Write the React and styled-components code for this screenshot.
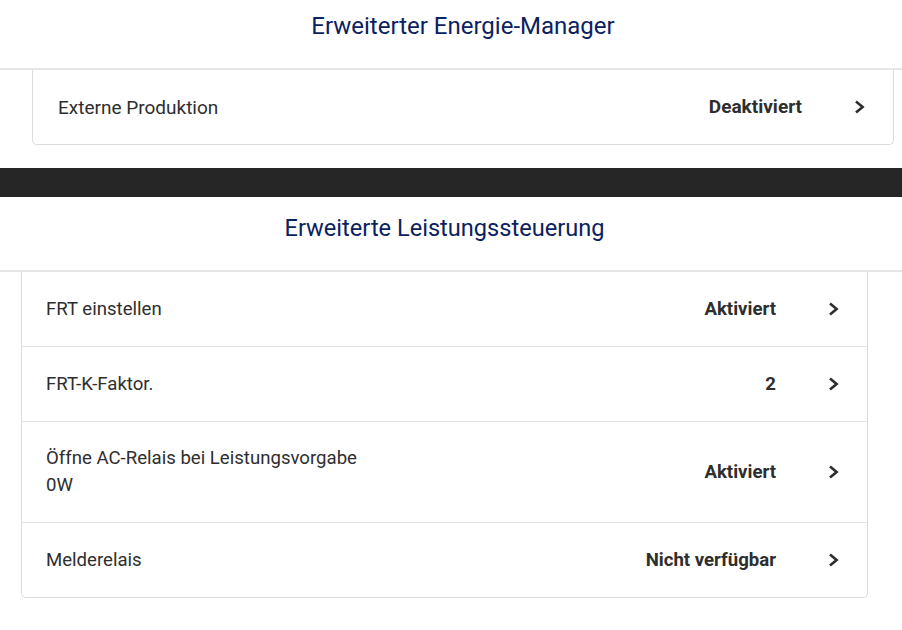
import React from "react";
import styled, { createGlobalStyle } from "styled-components";

const Global = createGlobalStyle`
  html, body { margin: 0; padding: 0; background: #fff; }
  body { font-family: Roboto, "Liberation Sans", Arial, sans-serif; -webkit-font-smoothing: antialiased; }
`;

const Page = styled.div`
  display: flex;
  flex-direction: column;
  width: 902px;
  min-height: 630px;
  background: #fff;
`;

const Section = styled.section`
  display: flex;
  flex-direction: column;
  padding-bottom: ${(p) => p.$bottom}px;
`;

const Header = styled.header`
  box-sizing: border-box;
  height: ${(p) => p.$height}px;
  padding: ${(p) => p.$top}px ${(p) => p.$right}px 0 ${(p) => p.$left}px;
  border-bottom: 2px solid #e6e6e6;
`;

const Title = styled.h2`
  margin: 0;
  text-align: center;
  font-size: ${(p) => p.$size}px;
  line-height: 26px;
  font-weight: 400;
  color: #0b2161;
`;

const CardWrap = styled.div`
  padding: 0 ${(p) => p.$right}px 0 ${(p) => p.$left}px;
`;

const Card = styled.div`
  border: 1px solid #dcdcdc;
  border-top: none;
  border-radius: 0 0 5px 5px;
  background: #fff;
`;

const Row = styled.div`
  display: flex;
  align-items: center;
  min-height: 28px;
  padding: 23px 28px 23px ${(p) => p.$pad}px;
  border-top: ${(p) => (p.$first ? "none" : "1px solid #e2e2e2")};
  font-size: ${(p) => p.$size}px;
  line-height: 28px;
  color: #2e2e2e;
`;

const Label = styled.div`
  flex: 1;
  line-height: 27px;
`;

const Value = styled.div`
  font-weight: 700;
  color: #2e2e2e;
  margin-right: 52px;
`;

const Chevron = styled.svg`
  width: 11px;
  height: 14px;
  flex: none;
`;

const DarkBar = styled.div`
  height: 29px;
  background: #262626;
`;

const Arrow = () => (
  <Chevron viewBox="0 0 11 14">
    <polyline points="2,1.6 8.6,7 2,12.4" fill="none" stroke="#2e2e2e" strokeWidth="2.6" />
  </Chevron>
);

const Item = ({ label, value, first, size, pad }) => (
  <Row $first={first} $size={size} $pad={pad}>
    <Label>{label}</Label>
    <Value>{value}</Value>
    <Arrow />
  </Row>
);

export default function App() {
  return (
    <Page>
      <Global />
      <Section $bottom={23}>
        <Header $height={70} $top={13} $left={32} $right={8}>
          <Title $size={24}>Erweiterter Energie-Manager</Title>
        </Header>
        <CardWrap $left={32} $right={8}>
          <Card>
            <Item first label="Externe Produktion" value="Deaktiviert" size={19} pad={25} />
          </Card>
        </CardWrap>
      </Section>
      <DarkBar />
      <Section $bottom={0}>
        <Header $height={75} $top={18} $left={21} $right={34}>
          <Title $size={23.6}>Erweiterte Leistungssteuerung</Title>
        </Header>
        <CardWrap $left={21} $right={34}>
          <Card>
            <Item first label="FRT einstellen" value="Aktiviert" size={18.6} pad={24} />
            <Item label="FRT-K-Faktor." value="2" size={18.6} pad={24} />
            <Item
              label={
                <>
                  Öffne AC-Relais bei Leistungsvorgabe
                  <br />
                  0W
                </>
              }
              value="Aktiviert"
              size={18.6}
              pad={24}
            />
            <Item label="Melderelais" value="Nicht verfügbar" size={18.6} pad={24} />
          </Card>
        </CardWrap>
      </Section>
    </Page>
  );
}
